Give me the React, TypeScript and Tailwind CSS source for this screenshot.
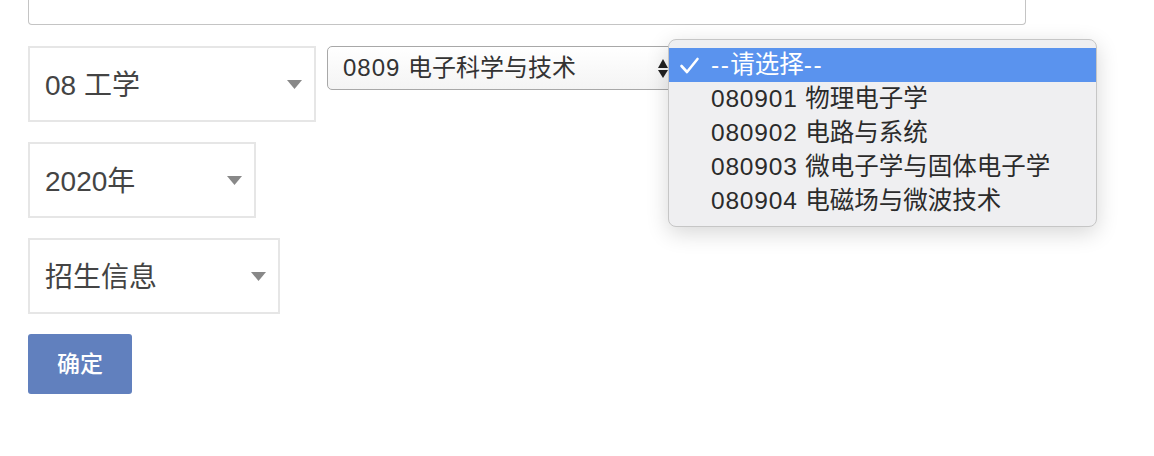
import { useState } from "react";

const font = { fontFamily: '"Liberation Sans", "Noto Sans CJK SC", sans-serif' };

const options = [
  { code: "080901", name: "物理电子学" },
  { code: "080902", name: "电路与系统" },
  { code: "080903", name: "微电子学与固体电子学" },
  { code: "080904", name: "电磁场与微波技术" },
];

function Caret() {
  return (
    <svg width="15" height="9" viewBox="0 0 15 9" className="shrink-0">
      <path d="M0 0 L15 0 L7.5 9 Z" fill="#888" />
    </svg>
  );
}

function BigSelect({ label, width }: { label: string; width: string }) {
  return (
    <div
      className={`flex h-[76px] ${width} items-center justify-between border-2 border-[#e6e6e6] bg-white pl-[15px] pr-[12px]`}
    >
      <span className="pt-[4px] text-[28px] leading-none text-[#444]">{label}</span>
      <Caret />
    </div>
  );
}

export default function App() {
  const [selected] = useState(-1);

  return (
    <div className="min-h-[456px] bg-white pl-[28px]" style={font}>
      <div className="h-[25px] w-[998px] rounded-b-[4px] border border-t-0 border-[#c4c4c4]" />

      <div className="mt-[21px] flex flex-col gap-[20px]">
        <div className="flex items-start gap-[11px]">
          <BigSelect label="08 工学" width="w-[288px]" />

          <div className="relative">
            <div className="flex h-[44px] w-[350px] items-center justify-between rounded-[5px] border border-[#a8a8a8] bg-gradient-to-b from-white to-[#f4f4f4] pl-[15px] pr-[8px]">
              <span className="text-[24px] leading-none text-[#333]">
                <span className="tracking-[1px]">0809 </span>电子科学与技术
              </span>
              <svg width="10" height="20" viewBox="0 0 10 20" className="shrink-0">
                <path d="M0 10 L5 1 L10 10 Z" fill="#222" />
                <path d="M0 12 L10 12 L5 20 Z" fill="#222" />
              </svg>
            </div>

            <div className="absolute left-[341px] top-[-7px] z-10 w-[429px] rounded-[8px] border border-[#c6c6c6] bg-[#efeff1] py-[8px] shadow-[0_6px_22px_rgba(0,0,0,0.16)]">
              <div
                className={`flex h-[34px] items-center ${
                  selected === -1 ? "bg-[#5a93ee] text-white" : "text-[#2b2b2b]"
                }`}
              >
                <svg width="42" height="20" viewBox="0 0 42 20" className="shrink-0">
                  <path
                    d="M12.5 11 L18 17 L28.5 4"
                    fill="none"
                    stroke="#fff"
                    strokeWidth="2.6"
                    strokeLinecap="round"
                    strokeLinejoin="round"
                  />
                </svg>
                <span className="text-[24.5px] leading-none">
                  <span className="tracking-[1.5px]">--</span>请选择
                  <span className="tracking-[1.5px]">--</span>
                </span>
              </div>
              {options.map((o) => (
                <div key={o.code} className="flex h-[34px] items-center pl-[42px] text-[#2b2b2b]">
                  <span className="text-[24.5px] leading-none">
                    <span className="tracking-[0.8px]">{o.code} </span>
                    {o.name}
                  </span>
                </div>
              ))}
            </div>
          </div>
        </div>

        <BigSelect label="2020年" width="w-[228px]" />
        <BigSelect label="招生信息" width="w-[252px]" />

        <button
          type="button"
          className="h-[60px] w-[104px] rounded-[3px] bg-[#6180be] text-[23px] font-medium text-white"
        >
          确定
        </button>
      </div>
    </div>
  );
}
